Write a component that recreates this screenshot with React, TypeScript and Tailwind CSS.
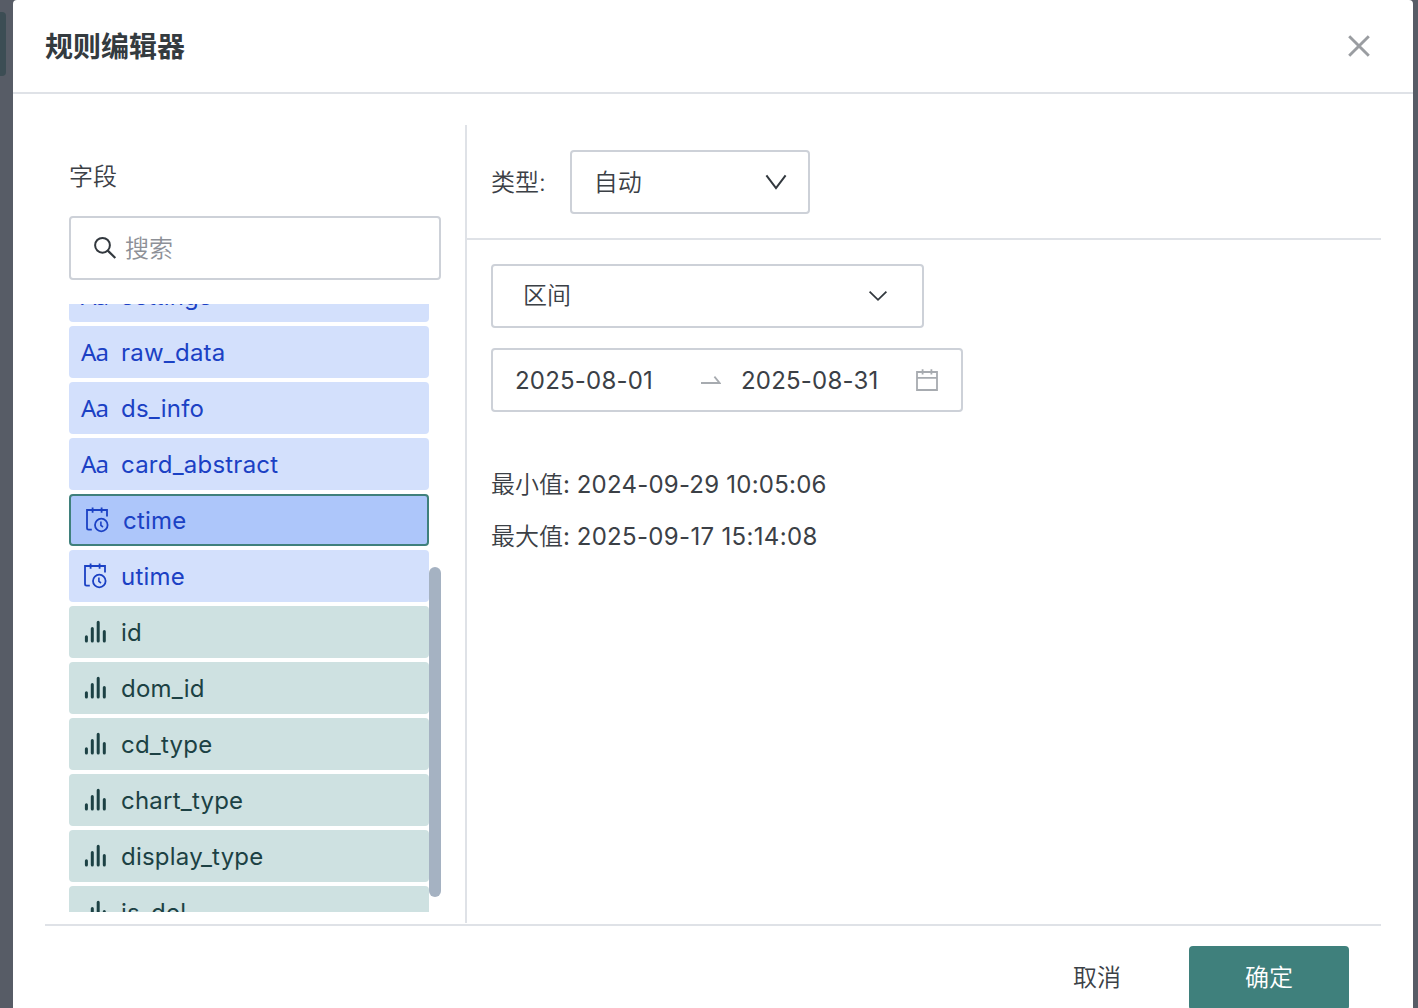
import clsx from 'clsx';
import React from 'react';

type FieldKind = 'text' | 'date' | 'number';

interface Field {
  name: string;
  kind: FieldKind;
}

const FIELDS: Field[] = [
  { name: 'settings', kind: 'text' },
  { name: 'raw_data', kind: 'text' },
  { name: 'ds_info', kind: 'text' },
  { name: 'card_abstract', kind: 'text' },
  { name: 'ctime', kind: 'date' },
  { name: 'utime', kind: 'date' },
  { name: 'id', kind: 'number' },
  { name: 'dom_id', kind: 'number' },
  { name: 'cd_type', kind: 'number' },
  { name: 'chart_type', kind: 'number' },
  { name: 'display_type', kind: 'number' },
  { name: 'is_del', kind: 'number' },
];

function CloseIcon() {
  return (
    <svg width="24" height="24" viewBox="0 0 24 24" fill="none">
      <path
        d="M2.2 2.2L21.8 21.8M21.8 2.2L2.2 21.8"
        stroke="#9a9da1"
        strokeWidth="2.9"
      />
    </svg>
  );
}

function SearchIcon() {
  return (
    <svg width="24" height="24" viewBox="0 0 24 24" fill="none">
      <circle cx="9.5" cy="9.3" r="7.4" stroke="#32383e" strokeWidth="2" />
      <path d="M14.8 14.6L22.3 22" stroke="#32383e" strokeWidth="2.2" />
    </svg>
  );
}

function DateIcon() {
  return (
    <svg width="28" height="28" viewBox="0 0 28 28" fill="none">
      <path
        d="M8.8 23.6H5.6Q4 23.6 4 22V4H24V10.4M9.6 1.6V6.8M18.6 1.6V6.8"
        stroke="currentColor"
        strokeWidth="1.8"
      />
      <circle cx="18.3" cy="19" r="6.3" stroke="currentColor" strokeWidth="1.8" />
      <path
        d="M17.9 15.4V19.4L20 21"
        stroke="currentColor"
        strokeWidth="1.6"
      />
    </svg>
  );
}

function NumberIcon() {
  return (
    <svg width="28" height="28" viewBox="0 0 28 28" fill="none">
      <path
        d="M5.4 18.8V23M11.3 10.4V23M17.2 4.2V23M23.3 13.6V23"
        stroke="currentColor"
        strokeWidth="3"
        strokeLinecap="round"
      />
    </svg>
  );
}

function CalendarIcon() {
  return (
    <svg width="24" height="24" viewBox="0 0 24 24" fill="none">
      <path
        d="M2 4H22V22H2ZM2 9.8H22M7.6 1.2V6.4M16.4 1.2V6.4"
        stroke="#a7abb0"
        strokeWidth="1.8"
      />
    </svg>
  );
}

function FieldIcon({ kind }: { kind: FieldKind }) {
  if (kind === 'date') {
    return <DateIcon />;
  }

  if (kind === 'number') {
    return <NumberIcon />;
  }

  return (
    <span className="w-7 font-['Noto_Sans',sans-serif] text-[24px] tracking-[-0.8px] leading-7">
      Aa
    </span>
  );
}

function FieldItem({ field, active }: { field: Field; active: boolean }) {
  return (
    <div
      className={clsx(
        'flex h-[52px] shrink-0 items-center gap-3 rounded-[4px]',
        active ? 'border-2 border-[#3f807c] bg-[#adc6fa]' : '',
        !active && field.kind !== 'number' ? 'bg-[#d3e0fc]' : '',
        field.kind === 'number'
          ? 'bg-[#cee1e1] text-[#1c4144]'
          : 'text-[#1b41c4]',
        'px-3',
      )}
    >
      <FieldIcon kind={field.kind} />
      <span className="pt-0.5 tracking-[0.22px]">{field.name}</span>
    </div>
  );
}

function FieldPanel() {
  return (
    <div className="flex w-[422px] shrink-0 flex-col border-r-2 border-[#dfe2e7] pl-6 pr-6">
      <div className="mt-[34px] h-9 font-[350] leading-9">字段</div>

      <div className="mt-[21px] flex h-16 items-center rounded-[4px] border-2 border-[#cdd1d8] pl-[22px]">
        <SearchIcon />
        <span className="ml-2 pt-0.5 font-[350] text-[#8d9097]">搜索</span>
      </div>

      <div className="mt-6 flex h-[608px] overflow-hidden">
        <div className="-mt-[34px] flex w-[360px] flex-col gap-1">
          {FIELDS.map((field) => (
            <FieldItem
              key={field.name}
              field={field}
              active={field.name === 'ctime'}
            />
          ))}
        </div>
        <div className="mt-[263px] h-[330px] w-3 rounded-full bg-[#a5b2c2]" />
      </div>
    </div>
  );
}

function RulePanel() {
  return (
    <div className="flex-1">
      <div className="flex h-[115px] items-center border-b-2 border-[#dfe2e7] pl-6">
        <span className="pt-0.5 font-[350]">类型:</span>
        <div className="ml-6 flex h-16 w-60 items-center justify-between rounded-[4px] border-2 border-[#cdd1d8] pl-[22px] pr-[21px]">
          <span className="pt-0.5 font-[350]">自动</span>
          <svg width="22" height="16" viewBox="0 0 22 16" fill="none">
            <path d="M1.4 1.4L11 14L20.6 1.4" stroke="#32383e" strokeWidth="2" />
          </svg>
        </div>
      </div>

      <div className="flex flex-col pl-6 pt-6">
        <div className="flex h-16 w-[433px] items-center justify-between rounded-[4px] border-2 border-[#cdd1d8] pl-[30px] pr-[34px]">
          <span className="font-[350]">区间</span>
          <svg width="20" height="12" viewBox="0 0 20 12" fill="none">
            <path d="M1.6 1.6L10 9.8L18.4 1.6" stroke="#32383e" strokeWidth="1.8" />
          </svg>
        </div>

        <div className="mt-5 flex h-16 w-[472px] items-center rounded-[4px] border-2 border-[#cdd1d8] pl-[22px]">
          <span className="w-[186px] pt-0.5 tracking-[0.2px]">2025-08-01</span>
          <svg width="20" height="10" viewBox="0 0 20 10" fill="none">
            <path d="M0 8H18.6L13.4 1.6" stroke="#a7abb0" strokeWidth="1.8" />
          </svg>
          <span className="ml-5 w-[174px] pt-0.5 tracking-[0.2px]">2025-08-31</span>
          <CalendarIcon />
        </div>

        <div className="mt-[55px] flex flex-col gap-4 leading-9">
          <div>
            <span className="font-[350]">最小值</span>:{' '}
            <span className="tracking-[0.23px]">2024-09-29 10:05:06</span>
          </div>
          <div>
            <span className="font-[350]">最大值</span>:{' '}
            <span className="tracking-[0.33px]">2025-09-17 15:14:08</span>
          </div>
        </div>
      </div>
    </div>
  );
}

export default function App() {
  return (
    <div className="flex h-[1008px] w-[1418px] overflow-hidden bg-[#575c66] font-['Inter','Noto_Sans_CJK_SC',sans-serif] text-[24px] text-[#3b4046]">
      <div className="w-[13px] shrink-0 pt-3">
        <div className="h-16 w-1.5 rounded-r-[4px] bg-[#3c4d54]" />
      </div>

      <div className="flex w-[1400px] shrink-0 flex-col rounded-t-[4px] bg-white">
        <div className="flex h-[94px] shrink-0 items-center justify-between border-b-2 border-[#dfe2e7] pl-8 pr-[42px]">
          <h1 className="pt-0.5 text-[28px] font-bold text-[#343b3f]">
            规则编辑器
          </h1>
          <CloseIcon />
        </div>

        <div className="mx-8 flex h-[832px] shrink-0 border-b-2 border-[#dfe2e7] pb-px pt-[31px]">
          <FieldPanel />
          <RulePanel />
        </div>

        <div className="mx-8 mt-5 flex justify-end pr-8">
          <button className="h-16 w-[184px] font-[350]">取消</button>
          <button className="h-16 w-40 rounded-[4px] bg-[#3f807c] font-[350] text-white">
            确定
          </button>
        </div>
      </div>
    </div>
  );
}
